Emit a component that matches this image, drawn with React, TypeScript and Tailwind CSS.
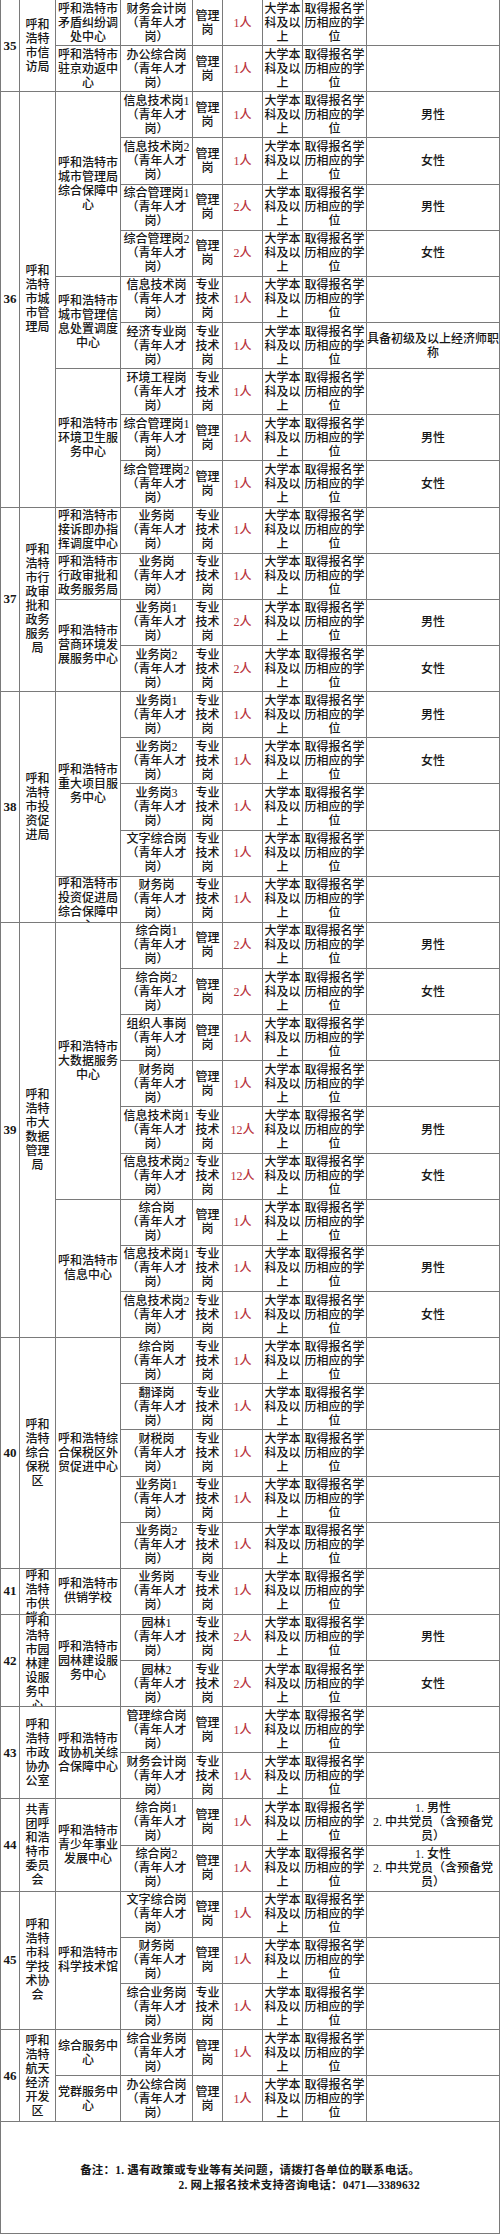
import React from "react";

type Job = { post: string; kind: "m" | "z"; num: string; note?: string[] };
type Unit = { name: string[]; jobs: Job[] };
type Dept = { no: string; name: string[]; units: Unit[] };

const M = ["管理", "岗"];
const Z = ["专业", "技术", "岗"];
const EDU = ["大学本", "科及以", "上"];
const DEG = ["取得报名学", "历相应的学", "位"];
const MALE = ["男性"];
const FEMALE = ["女性"];

const j = (post: string, kind: "m" | "z", num = "1人", note?: string[]): Job => ({ post, kind, num, note });

const depts: Dept[] = [
  {
    no: "35",
    name: ["呼和", "浩特", "市信", "访局"],
    units: [
      { name: ["呼和浩特市", "矛盾纠纷调", "处中心"], jobs: [j("财务会计岗", "m")] },
      { name: ["呼和浩特市", "驻京劝返中", "心"], jobs: [j("办公综合岗", "m")] },
    ],
  },
  {
    no: "36",
    name: ["呼和", "浩特", "市城", "市管", "理局"],
    units: [
      {
        name: ["呼和浩特市", "城市管理局", "综合保障中", "心"],
        jobs: [
          j("信息技术岗1", "m", "1人", MALE),
          j("信息技术岗2", "m", "1人", FEMALE),
          j("综合管理岗1", "m", "2人", MALE),
          j("综合管理岗2", "m", "2人", FEMALE),
        ],
      },
      {
        name: ["呼和浩特市", "城市管理信", "息处置调度", "中心"],
        jobs: [j("信息技术岗", "z"), j("经济专业岗", "z", "1人", ["具备初级及以上经济师职", "称"])],
      },
      {
        name: ["呼和浩特市", "环境卫生服", "务中心"],
        jobs: [j("环境工程岗", "z"), j("综合管理岗1", "m", "1人", MALE), j("综合管理岗2", "m", "1人", FEMALE)],
      },
    ],
  },
  {
    no: "37",
    name: ["呼和", "浩特", "市行", "政审", "批和", "政务", "服务", "局"],
    units: [
      { name: ["呼和浩特市", "接诉即办指", "挥调度中心"], jobs: [j("业务岗", "z")] },
      { name: ["呼和浩特市", "行政审批和", "政务服务局"], jobs: [j("业务岗", "z")] },
      {
        name: ["呼和浩特市", "营商环境发", "展服务中心"],
        jobs: [j("业务岗1", "z", "2人", MALE), j("业务岗2", "z", "2人", FEMALE)],
      },
    ],
  },
  {
    no: "38",
    name: ["呼和", "浩特", "市投", "资促", "进局"],
    units: [
      {
        name: ["呼和浩特市", "重大项目服", "务中心"],
        jobs: [j("业务岗1", "z", "1人", MALE), j("业务岗2", "z", "1人", FEMALE), j("业务岗3", "z"), j("文字综合岗", "z")],
      },
      { name: ["呼和浩特市", "投资促进局", "综合保障中", "心"], jobs: [j("财务岗", "z")] },
    ],
  },
  {
    no: "39",
    name: ["呼和", "浩特", "市大", "数据", "管理", "局"],
    units: [
      {
        name: ["呼和浩特市", "大数据服务", "中心"],
        jobs: [
          j("综合岗1", "m", "2人", MALE),
          j("综合岗2", "m", "2人", FEMALE),
          j("组织人事岗", "m"),
          j("财务岗", "m"),
          j("信息技术岗1", "z", "12人", MALE),
          j("信息技术岗2", "z", "12人", FEMALE),
        ],
      },
      {
        name: ["呼和浩特市", "信息中心"],
        jobs: [j("综合岗", "m"), j("信息技术岗1", "z", "1人", MALE), j("信息技术岗2", "z", "1人", FEMALE)],
      },
    ],
  },
  {
    no: "40",
    name: ["呼和", "浩特", "综合", "保税", "区"],
    units: [
      {
        name: ["呼和浩特综", "合保税区外", "贸促进中心"],
        jobs: [j("综合岗", "z"), j("翻译岗", "z"), j("财税岗", "z"), j("业务岗1", "z"), j("业务岗2", "z")],
      },
    ],
  },
  {
    no: "41",
    name: ["呼和", "浩特", "市供", "销合", "作社"],
    units: [{ name: ["呼和浩特市", "供销学校"], jobs: [j("业务岗", "z")] }],
  },
  {
    no: "42",
    name: ["呼和", "浩特", "市园", "林建", "设服", "务中", "心"],
    units: [
      {
        name: ["呼和浩特市", "园林建设服", "务中心"],
        jobs: [j("园林1", "z", "2人", MALE), j("园林2", "z", "2人", FEMALE)],
      },
    ],
  },
  {
    no: "43",
    name: ["呼和", "浩特", "市政", "协办", "公室"],
    units: [{ name: ["呼和浩特市", "政协机关综", "合保障中心"], jobs: [j("管理综合岗", "m"), j("财务会计岗", "z")] }],
  },
  {
    no: "44",
    name: ["共青", "团呼", "和浩", "特市", "委员", "会"],
    units: [
      {
        name: ["呼和浩特市", "青少年事业", "发展中心"],
        jobs: [
          j("综合岗1", "m", "1人", ["1. 男性", "2. 中共党员（含预备党", "员）"]),
          j("综合岗2", "m", "1人", ["1. 女性", "2. 中共党员（含预备党", "员）"]),
        ],
      },
    ],
  },
  {
    no: "45",
    name: ["呼和", "浩特", "市科", "学技", "术协", "会"],
    units: [{ name: ["呼和浩特市", "科学技术馆"], jobs: [j("文字综合岗", "m"), j("财务岗", "m"), j("综合业务岗", "z")] }],
  },
  {
    no: "46",
    name: ["呼和", "浩特", "航天", "经济", "开发", "区"],
    units: [
      { name: ["综合服务中", "心"], jobs: [j("综合业务岗", "m")] },
      { name: ["党群服务中", "心"], jobs: [j("办公综合岗", "m")] },
    ],
  },
];

const COLS = [
  "col-start-1",
  "col-start-2",
  "col-start-3",
  "col-start-4",
  "col-start-5",
  "col-start-6",
  "col-start-7",
  "col-start-8",
  "col-start-9",
];

function Cell({
  col,
  row,
  span = 1,
  lines,
  className = "",
}: {
  col: number;
  row: number;
  span?: number;
  lines: string[];
  className?: string;
}) {
  return (
    <div
      className={`${COLS[col - 1]} bg-white flex flex-col items-center [justify-content:safe_center] overflow-hidden text-center whitespace-nowrap ${className}`}
      style={{ gridRow: `${row} / span ${span}` }}
    >
      {lines.map((l, i) => (
        <span key={i}>{l}</span>
      ))}
    </div>
  );
}

export default function App() {
  const cells: React.ReactNode[] = [];
  let r = 1;
  depts.forEach((d) => {
    const dStart = r;
    const dCount = d.units.reduce((s, u) => s + u.jobs.length, 0);
    cells.push(
      <Cell key={`n${d.no}`} col={1} row={dStart} span={dCount} lines={[d.no]} className="text-[13px] font-bold" />
    );
    cells.push(<Cell key={`d${d.no}`} col={2} row={dStart} span={dCount} lines={d.name} />);
    d.units.forEach((u, ui) => {
      cells.push(<Cell key={`u${d.no}-${ui}`} col={3} row={r} span={u.jobs.length} lines={u.name} />);
      u.jobs.forEach((jb, ji) => {
        const k = `${d.no}-${ui}-${ji}`;
        cells.push(<Cell key={`p${k}`} col={4} row={r} lines={[jb.post, "（青年人才", "岗）"]} />);
        cells.push(<Cell key={`k${k}`} col={5} row={r} lines={jb.kind === "m" ? M : Z} />);
        cells.push(<Cell key={`c${k}`} col={6} row={r} lines={[jb.num]} className="text-[#b8333b]" />);
        cells.push(<Cell key={`e${k}`} col={7} row={r} lines={EDU} />);
        cells.push(<Cell key={`g${k}`} col={8} row={r} lines={DEG} />);
        cells.push(<Cell key={`x${k}`} col={9} row={r} lines={jb.note ?? []} />);
        r++;
      });
    });
  });

  return (
    <div className="w-[500px] h-[2237px] bg-white text-[#161616] font-['Liberation_Serif','Noto_Sans_CJK_SC',serif] font-medium text-[12px] leading-[14px]">
      <div className="grid grid-cols-[18px_35px_64px_71px_29px_39px_39px_63px_1fr] grid-rows-[repeat(46,45.15px)] gap-px bg-[#7a7a7a] pl-px pr-px pb-px">
        {cells}
      </div>
      <div className="h-[112px] border-l border-r border-b border-[#7a7a7a] flex items-center justify-center">
        <div className="text-right text-[11.5px] leading-[15px] font-bold tracking-[0.2px]">
          <div>备注：1. 遇有政策或专业等有关问题，请拨打各单位的联系电话。</div>
          <div>2. 网上报名技术支持咨询电话：0471—3389632</div>
        </div>
      </div>
    </div>
  );
}
